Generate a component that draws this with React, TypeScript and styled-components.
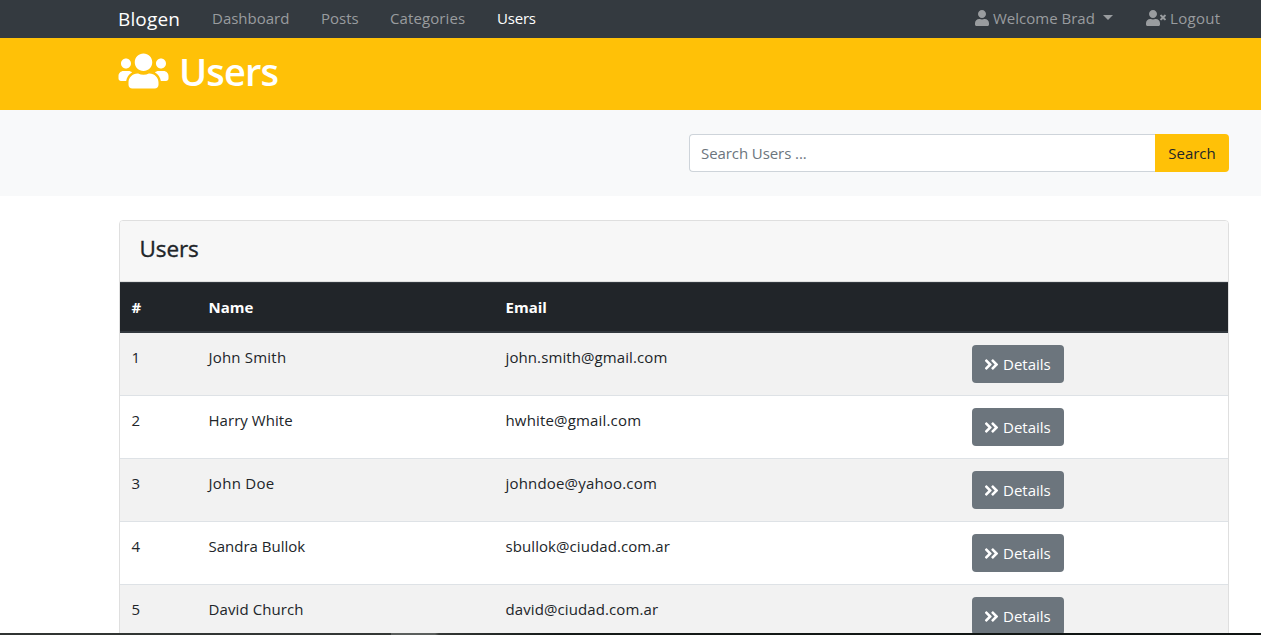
import React from "react";
import styled, { createGlobalStyle } from "styled-components";
import { FaUser, FaUserTimes, FaUsers, FaAngleDoubleRight } from "react-icons/fa";

const GlobalStyle = createGlobalStyle`
  *, *::before, *::after { box-sizing: border-box; }
  html, body { margin: 0; overflow: hidden; }
  body {
    font-family: "Open Sans", "Noto Sans", sans-serif;
    font-size: 15px;
    line-height: 24px;
    color: #212529;
    background: #fff;
  }
`;

const Page = styled.div`
  display: flex;
  flex-direction: column;
  height: 635px;
  overflow: hidden;
`;

const Container = styled.div`
  width: 1110px;
  margin-left: 119px;
`;

const Navbar = styled.nav`
  flex: none;
  height: 38px;
  background: #343a40;
`;

const NavInner = styled(Container)`
  display: flex;
  align-items: center;
  height: 36px;
`;

const Brand = styled.a<{ $w: number }>`
  width: ${(p) => p.$w}px;
  margin-left: -1px;
  padding-top: 1px;
  font-size: 19px;
  letter-spacing: 0.15px;
  color: #fff;
  white-space: nowrap;
`;

const NavLink = styled.a<{ $w?: number; $active?: boolean; $ls?: number }>`
  display: flex;
  align-items: center;
  width: ${(p) => (p.$w ? `${p.$w}px` : "auto")};
  color: ${(p) => (p.$active ? "#fff" : "#999c9f")};
  letter-spacing: ${(p) => p.$ls ?? 0}px;
  white-space: nowrap;
`;

const NavIcon = styled.span<{ $w: number }>`
  display: flex;
  flex: none;
  margin-right: 4px;

  svg { width: ${(p) => p.$w}px; height: 16px; }
`;

const NavRight = styled.div`
  display: flex;
  margin-left: auto;
  width: 254px;
`;

const Caret = styled.span`
  margin-left: 8px;
  margin-top: -1px;
  border-top: 5px solid currentColor;
  border-left: 5px solid transparent;
  border-right: 5px solid transparent;
`;

const Header = styled.header`
  flex: none;
  height: 72px;
  background: #ffc107;
  color: #fff;
`;

const Title = styled.h1`
  display: flex;
  align-items: center;
  margin: 0;
  margin-left: -1px;
  height: 66px;
  font-size: 38px;
  font-weight: 600;
  letter-spacing: -0.9px;

  svg { width: 51px; height: 40px; margin-right: 10px; }
`;

const SearchSection = styled.section`
  flex: none;
  padding: 24px 0;
  background: #f8f9fa;
`;

const SearchGroup = styled.div`
  display: flex;
  width: 540px;
  height: 38px;
  margin-left: auto;
`;

const SearchInput = styled.input`
  flex: 1;
  min-width: 0;
  padding: 0 11px;
  border: 1px solid #ced4da;
  border-right: 0;
  border-radius: 4px 0 0 4px;
  font: inherit;
  letter-spacing: -0.08px;
  background: #fff;
  outline: none;

  &::placeholder { color: #6c757d; opacity: 1; }
`;

const SearchButton = styled.button`
  width: 74px;
  padding: 0;
  border: 0;
  border-radius: 0 4px 4px 0;
  background: #ffc107;
  color: #212529;
  font: inherit;
`;

const Card = styled.section`
  width: 1110px;
  margin: 24px 0 0 119px;
  border: 1px solid #dfdfdf;
  border-radius: 4px;
`;

const CardHeader = styled.div`
  height: 61px;
  padding: 12px 19.5px;
  border-bottom: 1px solid #dfdfdf;
  border-radius: 3px 3px 0 0;
  background: #f7f7f7;
`;

const CardTitle = styled.h4`
  margin: 0;
  font-size: 22.5px;
  font-weight: 500;
  line-height: 31px;
  letter-spacing: -0.1px;
  -webkit-text-stroke: 0.35px currentColor;
`;

const Row = styled.div<{ $striped?: boolean }>`
  display: grid;
  grid-template-columns: 77px 297px 466px 268px;
  height: 63px;
  border-bottom: 1px solid #dee2e6;
  background: ${(p) => (p.$striped ? "#f2f2f2" : "#fff")};
`;

const HeadRow = styled(Row)`
  height: 51px;
  border-top: 1px solid #32383e;
  border-bottom: 2px solid #32383e;
  background: #212529;
  color: #fff;
  font-weight: 700;
`;

const Cell = styled.div<{ $ls?: number }>`
  padding: 12px 11.5px;
  letter-spacing: ${(p) => p.$ls ?? 0}px;
  white-space: nowrap;
`;

const ActionCell = styled.div`
  padding: 12px;
`;

const DetailsButton = styled.button`
  display: flex;
  align-items: center;
  width: 92px;
  height: 38px;
  padding: 0 12px;
  border: 0;
  border-radius: 4px;
  background: #6c757d;
  color: #fff;
  font: inherit;

  svg { width: 15px; height: 17px; margin-right: 4px; }
`;

const TaskbarEdge = styled.div`
  position: fixed;
  left: 0;
  right: 0;
  bottom: 0;
  height: 2px;
  background: linear-gradient(
    90deg,
    #303432 0, #343836 391px,
    #5b5f5d 391px, #5b5f5d 435px,
    #343836 439px, #151a18 560px, #0f1412 100%
  );
`;

const users = [
  { id: 1, name: "John Smith", nameLs: 0.2, email: "john.smith@gmail.com", emailLs: 0.1 },
  { id: 2, name: "Harry White", nameLs: 0.05, email: "hwhite@gmail.com", emailLs: 0.17 },
  { id: 3, name: "John Doe", nameLs: 0.3, email: "johndoe@yahoo.com", emailLs: 0.18 },
  { id: 4, name: "Sandra Bullok", nameLs: 0, email: "sbullok@ciudad.com.ar", emailLs: 0.08 },
  { id: 5, name: "David Church", nameLs: 0.1, email: "david@ciudad.com.ar", emailLs: 0.1 },
];

export default function App() {
  return (
    <Page>
      <GlobalStyle />
      <Navbar>
        <NavInner>
          <Brand $w={94}>Blogen</Brand>
          <NavLink $w={109}>Dashboard</NavLink>
          <NavLink $w={69}>Posts</NavLink>
          <NavLink $w={107} $ls={0.1}>Categories</NavLink>
          <NavLink $active $ls={-0.2}>Users</NavLink>
          <NavRight>
            <NavLink $w={171}>
              <NavIcon $w={14}><FaUser /></NavIcon>Welcome Brad<Caret />
            </NavLink>
            <NavLink $ls={0.3}>
              <NavIcon $w={20}><FaUserTimes /></NavIcon>Logout
            </NavLink>
          </NavRight>
        </NavInner>
      </Navbar>
      <Header>
        <Container>
          <Title><FaUsers />Users</Title>
        </Container>
      </Header>
      <SearchSection>
        <Container>
          <SearchGroup>
            <SearchInput placeholder="Search Users ..." />
            <SearchButton>Search</SearchButton>
          </SearchGroup>
        </Container>
      </SearchSection>
      <Card>
        <CardHeader>
          <CardTitle>Users</CardTitle>
        </CardHeader>
        <HeadRow>
          <Cell>#</Cell>
          <Cell>Name</Cell>
          <Cell>Email</Cell>
          <Cell />
        </HeadRow>
        {users.map((u, i) => (
          <Row key={u.id} $striped={i % 2 === 0}>
            <Cell>{u.id}</Cell>
            <Cell $ls={u.nameLs}>{u.name}</Cell>
            <Cell $ls={u.emailLs}>{u.email}</Cell>
            <ActionCell>
              <DetailsButton><FaAngleDoubleRight />Details</DetailsButton>
            </ActionCell>
          </Row>
        ))}
      </Card>
      <TaskbarEdge />
    </Page>
  );
}
